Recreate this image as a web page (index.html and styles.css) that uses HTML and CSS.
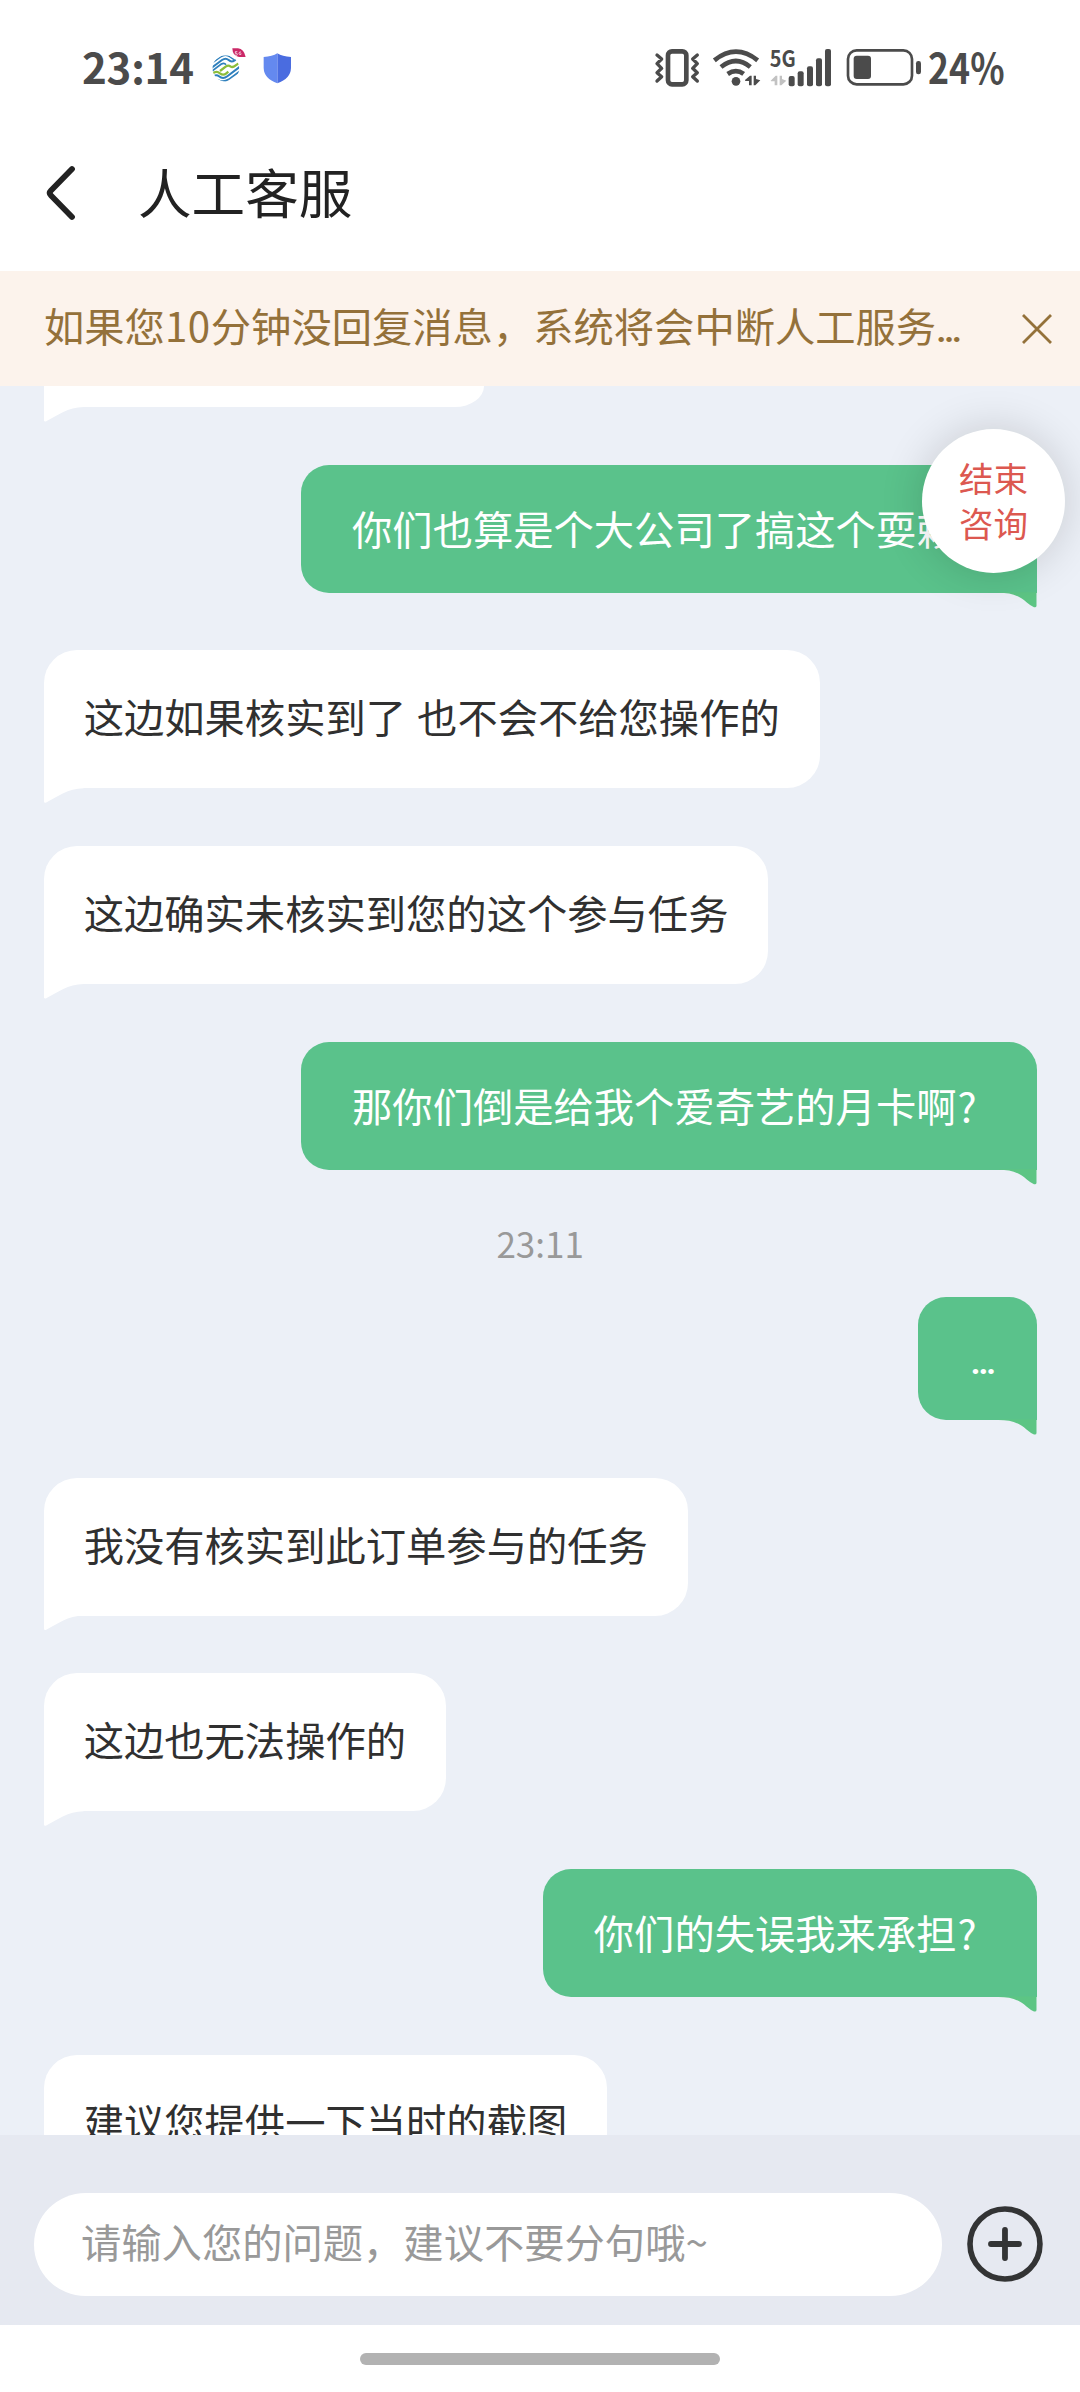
FILE: index.html
```html
<!DOCTYPE html>
<html lang="zh-CN">
<head>
<meta charset="utf-8">
<title>人工客服</title>
<link rel="stylesheet" href="styles.css">
</head>
<body>
<div class="screen">
  <header class="status">
    <span class="clock">23:14</span>
    <svg class="carrier" viewBox="456 50 104 130" aria-hidden="true">
      <defs><clipPath id="globe"><path d="M497 75C518 75 538 94 538 114S518 154 497 154S457 135 457 114S476 75 497 75Z"/></clipPath></defs>
      <g clip-path="url(#globe)" fill="none" stroke="#2f80bd" stroke-width="6">
        <path d="M452 101L482 80Q497 70 510 80L522 88" stroke-width="4"/>
        <path d="M454 113L486 89Q497 81 506 89Q514 97 524 90L534 83"/>
        <path d="M456 122L484 101Q493 96 498 103" stroke-width="5"/>
        <path d="M456 130L464 126Q472 122 480 129Q490 137 499 129L505 124" stroke="#8cbd3c" stroke-width="7"/>
        <path d="M480 122L497 109Q505 103 511 108Q518 113 526 106L540 96" stroke="#8cbd3c" stroke-width="7"/>
        <path d="M462 137Q470 132 477 138Q489 148 502 138L540 109"/>
        <path d="M472 147Q488 158 506 147L542 121" stroke-width="5"/>
      </g>
      <path d="M517 54H534Q552 56 557 80H537Q518 78 517 54Z" fill="#cb2867"/>
      <path d="M532 64H526V69Q532 67 532 72T526 74M543 65Q537 64 537 69T543 72V69" fill="none" stroke="#fff" stroke-width="2.2"/>
    </svg>
    <svg class="shield" viewBox="608 50 86 130" aria-hidden="true">
      <path d="M651 69Q666 79 692 80V113Q691 145 651 159Z" fill="#4a6ce0"/>
      <path d="M651 69Q636 79 610 80V113Q611 145 651 159Z" fill="#6489ef"/>
    </svg>
    <span class="spacer"></span>
    <svg class="vibrate" viewBox="42 50 140 130" aria-hidden="true">
      <g fill="none" stroke="#4b4b4b">
        <rect x="84" y="63" width="55" height="99" rx="12" stroke-width="14"/>
        <path d="M51 74L65 86L51 100L65 114L51 127L65 139L51 152M172 74L158 86L172 100L158 114L172 127L158 139L172 152" stroke-width="10" stroke-linecap="round" stroke-linejoin="round"/>
      </g>
    </svg>
    <svg class="wifi" viewBox="216 50 146 130" aria-hidden="true">
      <g fill="none" stroke="#4b4b4b" stroke-width="14">
        <path d="M223 90Q288 38 353 90"/><path d="M243 110Q288 74 331 110"/><path d="M263 131Q288 114 311 131"/>
      </g>
      <circle cx="288" cy="153" r="13" fill="#4b4b4b"/>
      <path d="M315 149L330 136H335V165H327V152H316ZM341 136H348V146L361 150L346 165H341Z" fill="#4b4b4b"/>
    </svg>
    <svg class="signal" viewBox="388 50 190 130" aria-hidden="true">
      <text x="390" y="109" class="net" textLength="78" lengthAdjust="spacingAndGlyphs">5G</text>
      <path d="M393 151L408 136H413V165H405V153H394ZM420 136H427V146L440 151L425 165H420Z" fill="#c2c2c2"/>
      <g fill="#4b4b4b">
        <rect x="447" y="137" width="18" height="31" rx="6"/><rect x="474" y="123" width="18" height="45" rx="6"/>
        <rect x="502" y="108" width="18" height="60" rx="6"/><rect x="529" y="84" width="18" height="84" rx="6"/>
        <rect x="556" y="56" width="18" height="112" rx="6"/>
      </g>
    </svg>
    <svg class="battery" viewBox="618 50 228 130" aria-hidden="true">
      <rect x="624" y="60" width="192" height="102" rx="26" fill="none" stroke="#4b4b4b" stroke-width="8"/>
      <rect x="641" y="76" width="52" height="70" rx="9" fill="#4b4b4b"/>
      <rect x="828" y="92" width="15" height="40" rx="7" fill="#4b4b4b"/>
    </svg>
    <span class="percent">24%</span>
  </header>

  <nav class="titlebar">
    <svg class="back" viewBox="0 0 32 56" aria-hidden="true"><path d="M28 4L7 25.500Q4.500 28 7 30.500L28 52" fill="none" stroke="#222" stroke-width="5.800" stroke-linecap="round"/></svg>
    <h1>人工客服</h1>
  </nav>

  <div class="notice">
    <p>如果您<span class="num">10</span>分钟没回复消息，系统将会中断人工服务<span class="dots">…</span></p>
    <svg class="close" viewBox="0 0 30 30" aria-hidden="true"><path d="M1 1L29 29M29 1L1 29" stroke="#94713a" stroke-width="2.800"/></svg>
  </div>

  <main class="chat">
    <div class="msg agent cut"></div>
    <div class="msg user">你们也算是个大公司了搞这个耍赖<span class="q">?</span></div>
    <div class="msg agent">这边如果核实到了 也不会不给您操作的</div>
    <div class="msg agent">这边确实未核实到您的这个参与任务</div>
    <div class="msg user">那你们倒是给我个爱奇艺的月卡啊<span class="q">?</span></div>
    <time class="stamp">23:11</time>
    <div class="msg user short"><span class="dots">…</span></div>
    <div class="msg agent">我没有核实到此订单参与的任务</div>
    <div class="msg agent">这边也无法操作的</div>
    <div class="msg user">你们的失误我来承担<span class="q">?</span></div>
    <div class="msg agent">建议您提供一下当时的截图</div>
    <button class="finish">结束<br>咨询</button>
  </main>

  <footer class="composer">
    <div class="field">请输入您的问题，建议不要分句哦~</div>
    <svg class="plus" viewBox="0 0 76 76" aria-hidden="true"><g fill="none" stroke="#333435" stroke-width="5.600" stroke-linecap="round"><circle cx="38" cy="38" r="35"/><path d="M38 24V52M24 38H52" stroke-width="5.800"/></g></svg>
  </footer>
  <div class="home"><i></i></div>
</div>
</body>
</html>
```
FILE: styles.css
```css
* { box-sizing: border-box; }
body {
  margin: 0;
  background: #fff;
  font-family: "Noto Sans CJK SC", "Noto Sans", sans-serif;
  font-size: 40.3px;
}
.screen {
  width: 1080px;
  height: 2392px;
  display: flex;
  flex-direction: column;
  overflow: hidden;
}

/* status bar */
.status {
  height: 136.6px;
  flex: none;
  display: flex;
  align-items: center;
  padding: 0 76px 0 82px;
  color: #4b4b4b;
}
.status svg { height: 43.33px; flex: none; overflow: visible; }
.clock, .percent {
  margin-top: -4px;
  font-size: 42px;
  font-weight: 700;
  line-height: 60px;
  white-space: nowrap;
}
.clock { width: 130px; letter-spacing: -0.2px; }
.percent {
  width: 76px;
  margin-left: 5px;
  transform: scaleX(0.85);
  transform-origin: left center;
}
.carrier { width: 34.67px; }
.shield { width: 28.67px; margin-left: 16px; }
.spacer { flex: 1; }
.vibrate { width: 46.67px; }
.wifi { width: 48.67px; margin-left: 11.33px; }
.signal { width: 63.33px; margin-left: 8.67px; }
.battery { width: 76px; margin-left: 13.33px; margin-right: 1px; }
.net { font: 700 68px "Noto Sans CJK SC", sans-serif; fill: #4b4b4b; }

/* title bar */
.titlebar {
  height: 134.4px;
  flex: none;
  display: flex;
  align-items: flex-start;
  padding: 28.4px 0 0 44px;
}
.back { width: 32px; height: 56px; }
h1 {
  margin: -14px 0 0 62px;
  font-size: 53.6px;
  font-weight: 400;
  line-height: 80px;
  color: #222;
}

/* notice */
.notice {
  height: 115px;
  flex: none;
  display: flex;
  align-items: center;
  justify-content: space-between;
  padding: 0 28px 0 44px;
  background: #fcf3ec;
  color: #94713a;
}
.notice p { margin: -2px 0 0; line-height: 60px; white-space: nowrap; }
.num { letter-spacing: 0.6px; }
.dots { font-family: Roboto, sans-serif; font-size: 34px; font-weight: 700; }
.close { width: 30px; height: 30px; margin-top: 2px; }

/* conversation */
.chat {
  position: relative;
  height: 1749px;
  flex: none;
  overflow: hidden;
  display: flex;
  flex-direction: column;
  align-items: flex-start;
  gap: 57.7px;
  padding: 0 43.5px 0 43.7px;
  background: #ecf0f7;
}
.msg {
  position: relative;
  flex: none;
  white-space: nowrap;
}
.msg::after {
  content: "";
  position: absolute;
  top: calc(100% - 0.5px);
  height: 16px;
}
.agent {
  height: 138px;
  padding: 0 40px;
  line-height: 131px;
  word-spacing: 2px;
  border-radius: 33px 33px 33px 0;
  background: #fff;
  color: #303030;
}
.agent::after {
  left: 0;
  width: 41px;
  background: #fff;
  clip-path: path("M0 0V13Q0 16 3 14.500C14 9 24 .5 40 .5V0Z");
}
.cut { width: 440px; height: 21px; border-radius: 0 0 29px 0 / 0 0 21px 0; }
.user {
  align-self: flex-end;
  height: 128px;
  padding: 0 58px 0 51px;
  line-height: 126px;
  border-radius: 28px 28px 0 28px;
  background: #5ac28b;
  color: #fff;
}
.user::after {
  right: 0;
  width: 38px;
  background: #5dc584;
  clip-path: path("M38 0V13.500Q38 15.500 35.500 15Q32 13.500 28 10C20 3 12 .5 0 .5V0Z");
}
.q { display: inline-block; width: 22px; padding-left: 1px; }
.short { width: 118.5px; height: 122.5px; padding: 0 0 0 52.5px; line-height: 120px; }
.stamp {
  align-self: center;
  height: 60px;
  margin: -14px 0 -33.7px;
  font-size: 35px;
  line-height: 60px;
  color: #999;
}
.finish {
  position: absolute;
  left: 922px;
  top: 43px;
  width: 143px;
  height: 144px;
  padding: 0 0 1px;
  border: 0;
  border-radius: 50%;
  background: #fff;
  box-shadow: 0 0 44px rgba(0, 0, 0, 0.16);
  font: 34.5px/45px "Noto Sans CJK SC", sans-serif;
  color: #dc5850;
}

/* composer */
.composer {
  height: 190px;
  flex: none;
  display: flex;
  align-items: center;
  padding: 29px 37px 0 34px;
  background: #e6e9f1;
}
.field {
  width: 908px;
  height: 103px;
  padding-left: 47px;
  border-radius: 52px;
  background: #fff;
  line-height: 96px;
  color: #999;
}
.plus { width: 76px; height: 76px; margin-left: 25.5px; }

.home { flex: 1; display: flex; justify-content: center; padding-top: 27.6px; }
.home i { width: 360px; height: 12px; border-radius: 6px; background: #b2b2b2; }
```
